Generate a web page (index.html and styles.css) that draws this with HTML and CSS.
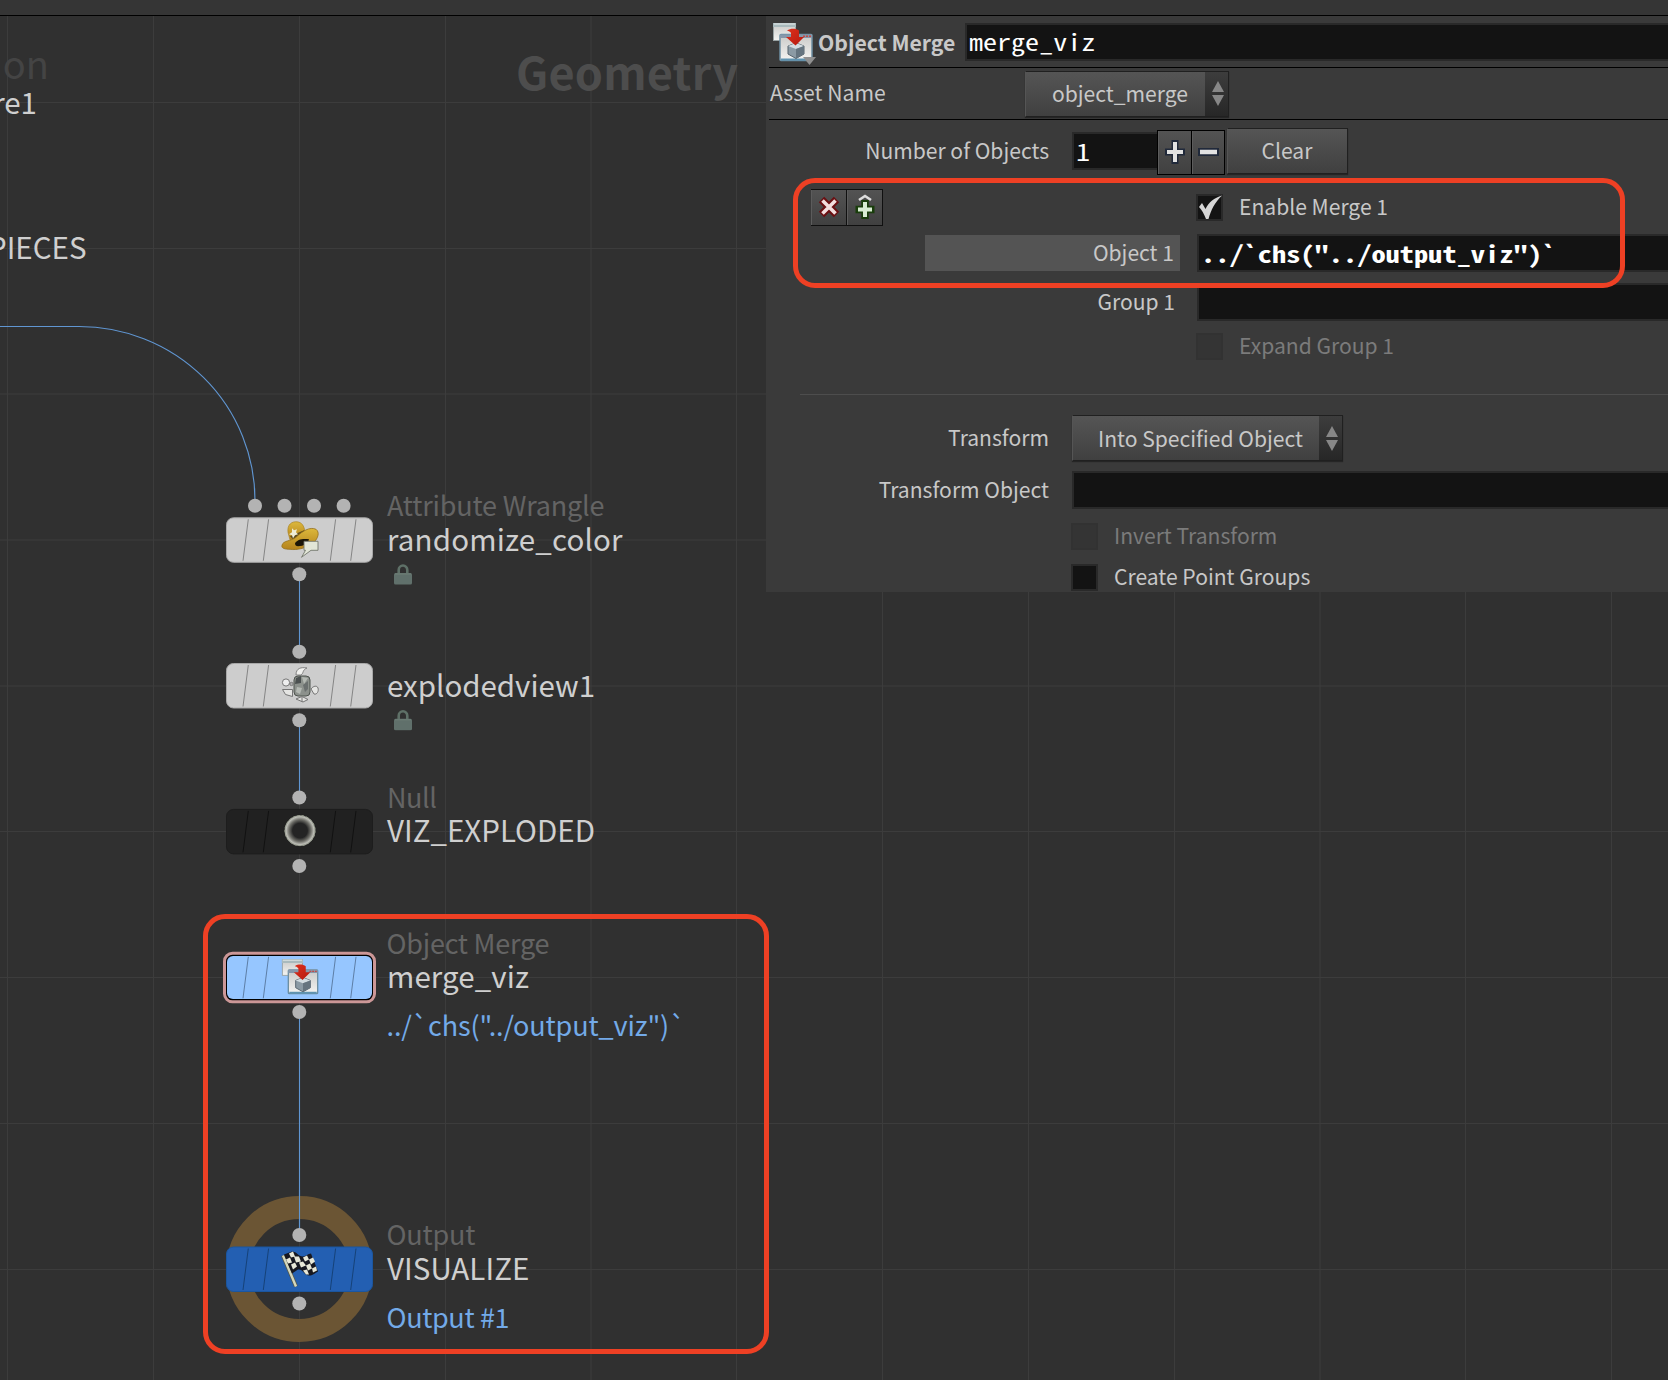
FILE: index.html
```html
<!DOCTYPE html>
<html lang="en">
<head>
<meta charset="utf-8">
<title>Geometry network</title>
<link rel="stylesheet" href="styles.css">
</head>
<body>
<svg class="defs" width="0" height="0" aria-hidden="true">
  <defs>
    <linearGradient id="win" x1="0" y1="0" x2="0" y2="1"><stop offset="0" stop-color="#c9c9c7"/><stop offset="1" stop-color="#f4f4f2"/></linearGradient>
    <linearGradient id="red" x1="0" y1="0" x2="1" y2="1"><stop offset="0" stop-color="#dd2f1c"/><stop offset="1" stop-color="#b51a10"/></linearGradient>
    <linearGradient id="hat" x1="0" y1="0" x2="0" y2="1"><stop offset="0" stop-color="#dcb83c"/><stop offset="1" stop-color="#b5831c"/></linearGradient>
    <radialGradient id="nullring"><stop offset="0.48" stop-color="#242424"/><stop offset="0.72" stop-color="#6f6f69"/><stop offset="0.9" stop-color="#bcbdb6"/><stop offset="1" stop-color="#8d9186"/></radialGradient>
    <symbol id="merge" viewBox="0 0 42 44">
      <rect x="1.5" y="1.5" width="22" height="17" fill="url(#win)" stroke="#9aa3a4"/>
      <path d="M1 1h23v4H1z" fill="#a9babd"/><path d="M2 2h21" stroke="#e4eaea"/>
      <rect x="8" y="12.500" width="32" height="26" rx="1" fill="url(#win)" stroke="#6d8fa3" stroke-width="1.500"/>
      <path d="M8 12.500h32v3.500H8z" fill="#8797aa"/><path d="M31 14.200h2m1 0h2m1 0h2" stroke="#c24a45" stroke-width="1.500"/>
      <path d="M9 37.500h30" stroke="#5f93b0" stroke-width="2"/>
      <path d="M16 24l8-3 8 3v8l-8 4.500-8-4.500z" fill="#8b9aa4" stroke="#55636d"/>
      <path d="M16 24l8 3 8-3-8-3z" fill="#d4dde2"/><path d="M24 27l8-3v8l-8 4.500z" fill="#65747f"/>
      <path d="M15 8.500c4-2.500 9-2 12 0v6.500h5l-8.500 8.500L14 15h5v-4c-1-1.500-2-2-4-2.500z" fill="url(#red)"/>
    </symbol>
    <symbol id="lock" viewBox="0 0 18 21">
      <path d="M4.700 9.500V6a4.300 4.500 0 0 1 8.600 0v3.500" fill="none" stroke="#5e7067" stroke-width="2.600"/>
      <rect y="9" width="18" height="11.500" rx="1.500" fill="#60706b"/><path d="M1 10h16" stroke="#6e7f77"/>
    </symbol>
    <g id="ticks" fill="none" stroke-width="1"><path d="M22.300 2L17 43.500M42.600 2L37.300 43.500M109.600 2l-5.300 41.500M130 2l-5.300 41.500"/></g>
  </defs>
</svg>

<main class="editor">
  <div class="topbar"></div>
  <svg class="network" width="1668" height="1364" viewBox="0 16 1668 1364">
    <path class="grid" d="M7.500 16V1380M153.500 16V1380M299.500 16V1380M445.500 16V1380M591 16V1380M736.500 16V1380M882.500 16V1380M1028.500 16V1380M1174.500 16V1380M1320 16V1380M1465.500 16V1380M1611.500 16V1380M0 102.500H1668M0 248.500H1668M0 394H1668M0 540H1668M0 686H1668M0 831.500H1668M0 977.500H1668M0 1123.500H1668M0 1269.500H1668"/>

    <text class="watermark" x="516" y="90" textLength="222">Geometry</text>
    <text class="ghost" x="49" y="79" text-anchor="end">on</text>
    <text class="name" x="37" y="114" text-anchor="end">re1</text>
    <text class="name" x="86.500" y="258.500" text-anchor="end">PIECES</text>

    <path class="wire" d="M0 326.500H79A176 174 0 0 1 255 500.500M299.500 574V652M299.500 720V797M299.500 1012V1235"/>
    <circle class="display-ring" cx="299.300" cy="1269" r="61.500"/>
    <path class="wire" d="M299.500 1190V1235"/>

    <g class="dots">
      <circle cx="255" cy="505.800" r="7"/><circle cx="284.500" cy="505.800" r="7"/><circle cx="314" cy="505.800" r="7"/><circle cx="343.600" cy="505.800" r="7"/>
      <circle cx="299.300" cy="574.300" r="7"/><circle cx="299.300" cy="651.700" r="7"/><circle cx="299.300" cy="720.300" r="7"/>
      <circle cx="299.300" cy="797.500" r="7"/><circle cx="299.300" cy="866" r="7"/><circle cx="299.300" cy="1012" r="7"/>
      <circle cx="299.300" cy="1235" r="7"/><circle cx="299.300" cy="1303.500" r="7"/>
    </g>

    <g transform="translate(226 517.300)">
      <rect class="node light" x=".5" y=".5" width="146" height="44.500" rx="7"/><use href="#ticks" stroke="#858585"/>
      <path d="M62 15c-1-8 4-11 9-10.500 5 .5 7 4 8 10l-4 5-11 3z" fill="url(#hat)" stroke="#a98426" stroke-width=".7"/>
      <path d="M64 19l14-6 2 4-12 6z" fill="#5b4a1d"/>
      <path d="M56 28c1-5 9-4 14-8 6-6 14-11 20-8 4 3 2 9-2 13-7 6-17 8-24 7-5 0-9-1-8-4z" fill="url(#hat)" stroke="#95701c" stroke-width=".8"/>
      <path d="M69 26c2-4 8-5 14-4-1 4-5 7-11 7-2 0-3-1-3-3z" fill="#1b1507"/>
      <path d="M66 11l2 2 3-1-1 3 2 2-3 1-2 3-1-3-3-1 3-2z" fill="#eeecd6"/>
      <path d="M78 24h14v9h-7l-9.500 7 4-7H78z" fill="#e2e6d7" stroke="#73776c" stroke-width=".9"/>
    </g>
    <g transform="translate(226 663)">
      <rect class="node light" x=".5" y=".5" width="146" height="44.500" rx="7"/><use href="#ticks" stroke="#858585"/>
      <path d="M70 12c0-7 5-8 11-7-5 2-3 5-6 7z" fill="#f0f0ee" stroke="#777" stroke-width=".9"/>
      <rect x="68" y="13" width="16" height="20" rx="4" fill="#8c918c" stroke="#4f544f"/>
      <path d="M70 15l5-2v7l-6 1z" fill="#4b5050"/><path d="M77 22l5-4v8l-3 3z" fill="#6a6f6e"/><path d="M76 14l6 1-4 6zM71 24l5 1-2 6-4-2z" fill="#b4b9b3"/>
      <circle cx="60" cy="19.500" r="3.600" fill="#eee" stroke="#777"/><circle cx="65.500" cy="21" r="1.700" fill="#aaa" stroke="#666" stroke-width=".7"/>
      <path d="M56.500 26.500l10 0 0 7-7-2zM85 26c2-3 6-4 7-1s-1 7-4 6zM70 36l6-2.500 6 3-5 2.500z" fill="#e5e5e3" stroke="#757575"/><path d="M76 34v5" stroke="#777"/>
    </g>
    <g transform="translate(226 808.900)">
      <rect class="node dark" x=".5" y=".5" width="146" height="44.500" rx="7"/><use href="#ticks" stroke="#111"/>
      <circle cx="74" cy="21.700" r="15.400" fill="url(#nullring)"/><circle cx="74" cy="21.700" r="15" fill="none" stroke="#9fa495" stroke-dasharray="2.500 2"/>
    </g>
    <g transform="translate(226 954.800)">
      <rect x="-1.500" y="-1.500" width="150" height="48.500" rx="8" fill="#000" stroke="#cc9797" stroke-width="3"/>
      <rect x="1" y="1.200" width="145" height="43" rx="6" fill="#96c6ff"/><use href="#ticks" stroke="#5d7ea6"/>
      <use href="#merge" x="55" y="3.500" width="38.500" height="40.500"/>
    </g>
    <g transform="translate(226 1246.500)">
      <rect class="node blue" x=".5" y=".5" width="146" height="44.500" rx="7"/><use href="#ticks" stroke="#164278"/>
      <path d="M57 9L70 40" stroke="#54584b" stroke-width="4"/><path d="M57 9L70 40" stroke="#d3d7bd" stroke-width="2.400"/>
      <path d="M58 8l8-3c5 0 6 5 11 5 3 0 5-3 8-3l7 18c-4 2-5 4-9 4-5 0-6-7-11-6l-6 4z" fill="#171820"/>
      <path d="M63 7l4-2 2 5-4 1zM60 13l4-2 2 5-4 1zM68 10l5 0 2 5-5 1zM65 18l4-2 2 4-4 3zM77 11l4-2 2 4-4 2zM73 16l4-1 3 4-5 2zM83 13l4-2 2 4-4 3zM80 19l4-2 2 5-4 2zM77 24l4-1 2 5-3 0zM86 22l4-2 1 4-4 2z" fill="#e8e8d8"/>
    </g>

    <text class="type" x="387" y="515.500" textLength="217.500">Attribute Wrangle</text>
    <text class="name" x="387" y="550.500" textLength="235.500">randomize_color</text>
    <use href="#lock" x="394" y="564" width="18" height="21"/>
    <text class="name" x="387" y="696.500" textLength="208">explodedview1</text>
    <use href="#lock" x="394" y="709.800" width="18" height="21"/>
    <text class="type" x="387" y="807.500" textLength="50">Null</text>
    <text class="name" x="387" y="842.300" textLength="208">VIZ_EXPLODED</text>
    <text class="type" x="386.500" y="953.500" textLength="163">Object Merge</text>
    <text class="name" x="387" y="987.500" textLength="142">merge_viz</text>
    <text class="note" x="386.500" y="1035.700" textLength="299">../`chs("../output_viz")`</text>
    <text class="type" x="386.500" y="1245.300" textLength="89">Output</text>
    <text class="name" x="387" y="1279.500" textLength="142.500">VISUALIZE</text>
    <text class="note" x="386.500" y="1327.500" textLength="123">Output #1</text>
  </svg>

  <section class="panel">
    <header class="row title-row">
      <svg class="op-icon" width="44" height="44" viewBox="0 0 44 44"><use href="#merge" width="42" height="44"/><path d="M31 35h13l-6.500 8z" fill="#909090"/></svg>
      <strong class="op-type">Object Merge</strong>
      <div class="field grow"><span class="mono">merge_viz</span></div>
    </header>
    <div class="row asset-row">
      <span class="asset-label">Asset Name</span>
      <div class="menu asset-menu"><span class="menu-text">object_merge</span><span class="spin"><i class="up"></i><i class="down"></i></span></div>
    </div>
    <div class="row count-row">
      <span class="label">Number of Objects</span>
      <div class="field count"><span class="mono">1</span></div>
      <div class="steppers">
        <span class="step"><svg width="20" height="26" viewBox="0 0 20 26"><path d="M10 1v24M0 13h20" stroke="#20293a" stroke-width="7"/><path d="M10 3v20M2 13h16" stroke="#e2e2e2" stroke-width="4"/></svg></span>
        <span class="step"><svg width="21" height="26" viewBox="0 0 21 26"><path d="M0 13h21" stroke="#20293a" stroke-width="8"/><path d="M2 13h17" stroke="#e2e2e2" stroke-width="4.500"/></svg></span>
      </div>
      <div class="clear">Clear</div>
    </div>
    <div class="row enable-row">
      <div class="tools">
        <span class="tool"><svg width="22" height="22" viewBox="0 0 22 22"><path d="M3.500 3.500l15 15M18.500 3.500l-15 15" stroke="#6a0f12" stroke-width="7.500"/><path d="M4.500 4.500l13 13M17.500 4.500l-13 13" stroke="#f2dede" stroke-width="3.600"/></svg></span>
        <span class="tool"><svg width="20" height="26" viewBox="0 0 20 26"><path d="M4 6l6-4 6 4" fill="none" stroke="#dedede" stroke-width="2.600"/><path d="M10 6v19M.5 15.500h19" stroke="#193d0b" stroke-width="7.500"/><path d="M10 8v15M3 15.500h14" stroke="#d9edd3" stroke-width="4"/></svg></span>
      </div>
      <span class="check"><svg width="27" height="27" viewBox="0 0 27 27"><path d="M3 13l3-4 3.500 6C13 8 18 4 26 1.500 19 8 15 16 12.500 25H10C8 20 6 16 3 13z" fill="#d5d5d5"/></svg></span>
      <span class="check-text">Enable Merge 1</span>
    </div>
    <div class="row object-row">
      <span class="label active">Object 1</span>
      <div class="field grow"><span class="mono bold">../`chs("../output_viz")`</span></div>
    </div>
    <div class="row group-row"><span class="label wide">Group 1</span><div class="field grow"></div></div>
    <div class="row expand-row disabled"><span class="check"></span><span class="check-text">Expand Group 1</span></div>
    <hr class="rule">
    <div class="row transform-row">
      <span class="label">Transform</span>
      <div class="menu transform-menu"><span class="menu-text">Into Specified Object</span><span class="spin"><i class="up"></i><i class="down"></i></span></div>
    </div>
    <div class="row path-row"><span class="label">Transform Object</span><div class="field grow"></div></div>
    <div class="row option-row disabled"><span class="check"></span><span class="check-text">Invert Transform</span></div>
    <div class="row option-row"><span class="check"></span><span class="check-text">Create Point Groups</span></div>
  </section>

  <div class="callout callout-params"></div>
  <div class="callout callout-nodes"></div>
</main>
</body>
</html>
```
FILE: styles.css
```css
* { box-sizing: border-box; }
body {
  margin: 0;
  background: #303030;
  color: #c8c8c8;
  font-family: "Noto Sans CJK SC", "Noto Sans", sans-serif;
  font-size: 21.1px;
  line-height: 30px;
}
.defs { position: absolute; }
.editor { position: relative; width: 1668px; height: 1380px; overflow: hidden; }
.topbar { height: 16px; background: #353535; border-bottom: 1px solid #000; }

/* network canvas */
.network { display: block; }
.grid { stroke: #3c3c3c; stroke-width: 1; fill: none; }
.wire { stroke: #6096d2; stroke-width: 1.1; fill: none; }
.dots { fill: #b3b3b3; }
.display-ring { fill: none; stroke: #6b5534; stroke-width: 23; }
.node.light { fill: #cdcdcd; stroke: #a8a8a8; }
.node.dark { fill: #212121; stroke: #1d1d1d; }
.node.blue { fill: #235fb2; stroke: #1b569f; }
.name { font-size: 29.5px; fill: #cfcfcf; }
.type { font-size: 27px; fill: #646464; }
.note { font-size: 27px; fill: #73aae8; }
.watermark { font-size: 45px; font-weight: 700; fill: #4d4d4d; }
.ghost { font-size: 38px; fill: #444; }

/* parameter panel */
.panel {
  position: absolute;
  left: 766px;
  top: 16px;
  width: 902px;
  height: 576px;
  padding-left: 3px;
  background: #3a3a3a;
  overflow: hidden;
}
.row { display: flex; align-items: center; white-space: nowrap; }
.title-row { height: 52px; padding-left: 3px; border-bottom: 1px solid #000; }
.op-icon { flex: none; margin-top: 5px; }
.op-type { width: 149px; padding-left: 2px; font-size: 21.2px; }
.field {
  height: 38px;
  padding-left: 2px;
  background: #131313;
  border: 2px solid #292929;
  border-right: 0;
  color: #fff;
  display: flex;
  align-items: center;
}
.grow { flex: 1; }
.mono {
  padding-bottom: 1px;
  font-family: "Noto Sans Mono CJK SC", "DejaVu Sans Mono", monospace;
  font-size: 23px;
  transform: scaleX(1.22);
  transform-origin: left;
}
.bold { font-weight: 700; transform: scaleX(1.235); }
.asset-row { height: 52px; border-bottom: 1px solid #000; }
.asset-label { width: 256px; padding-left: 1px; padding-bottom: 3px; }
.menu, .clear {
  height: 46px;
  display: flex;
  align-items: center;
  border: 1px solid #202020;
  border-left-color: #555;
  background: linear-gradient(#555, #404040);
  box-shadow: 0 1px 1px #252525;
}
.menu { justify-content: space-between; padding-left: 26px; }
.menu-text { padding-bottom: 1px; }
.asset-menu { width: 204px; }
.transform-menu { width: 271px; padding-left: 25px; }
.spin {
  width: 23px;
  align-self: stretch;
  display: flex;
  flex-direction: column;
  align-items: center;
  justify-content: center;
  gap: 3px;
  padding-left: 2px;
  background: linear-gradient(#3d3d3d, #272727);
}
.up, .down { border: 6px solid transparent; }
.up { border-top: 0; border-bottom: 11px solid #878787; }
.down { border-bottom: 0; border-top: 11px solid #878787; }
.count-row { height: 62px; }
.label { width: 280px; margin-right: 23px; padding-bottom: 2px; text-align: right; }
.count { width: 85px; }
.steppers { display: flex; width: 68px; height: 45px; padding: 1px; gap: 1px; margin-top: 2px; background: #000; }
.step, .tool {
  flex: 1;
  display: flex;
  align-items: center;
  justify-content: center;
  background: linear-gradient(#535353, #404040);
  border-left: 1px solid #5c5c5c;
}
.clear { width: 121px; margin-left: 2px; justify-content: center; padding-right: 1px; padding-bottom: 3px; }
.enable-row { height: 51px; padding-left: 42px; }
.tools { display: flex; gap: 1px; width: 72px; height: 37px; padding: 1px 1px 1px 0; margin: -1px 313px 0 0; background: #101010; }
.tool svg { margin-bottom: 1px; }
.check { flex: none; width: 27px; height: 27px; background: #131313; border: 2px solid #292929; display: flex; align-items: center; justify-content: center; }
.check svg { flex: none; }
.check-text { margin-left: 16px; padding-bottom: 4px; }
.object-row { height: 40px; }
.label.active { width: 255px; height: 36px; margin-left: 156px; margin-right: 17px; padding: 2px 6px 0 0; background: #545454; }
.group-row { height: 38px; margin-top: 10px; }
.label.wide { width: 406px; margin-right: 22px; padding-bottom: 3px; }
.expand-row { height: 27px; margin-top: 12px; padding-left: 427px; }
.rule { height: 1px; margin: 34px 0 20px 31px; border: 0; background: #4d4d4d; }
.transform-row { height: 46px; }
.path-row { height: 38px; margin-top: 10px; }
.path-row .label { padding-bottom: 3px; }
.option-row { height: 27px; margin-top: 14px; padding-left: 302px; }
.disabled { color: #7b7b7b; }
.disabled .check { background: #343434; border-color: #323232; }

/* red highlight frames drawn over the canvas and panel */
.callout { position: absolute; border: 5px solid #ee4024; border-radius: 22px; }
.callout-params { left: 793px; top: 178px; width: 832px; height: 110px; }
.callout-nodes { left: 203px; top: 914px; width: 566px; height: 440px; }
```
